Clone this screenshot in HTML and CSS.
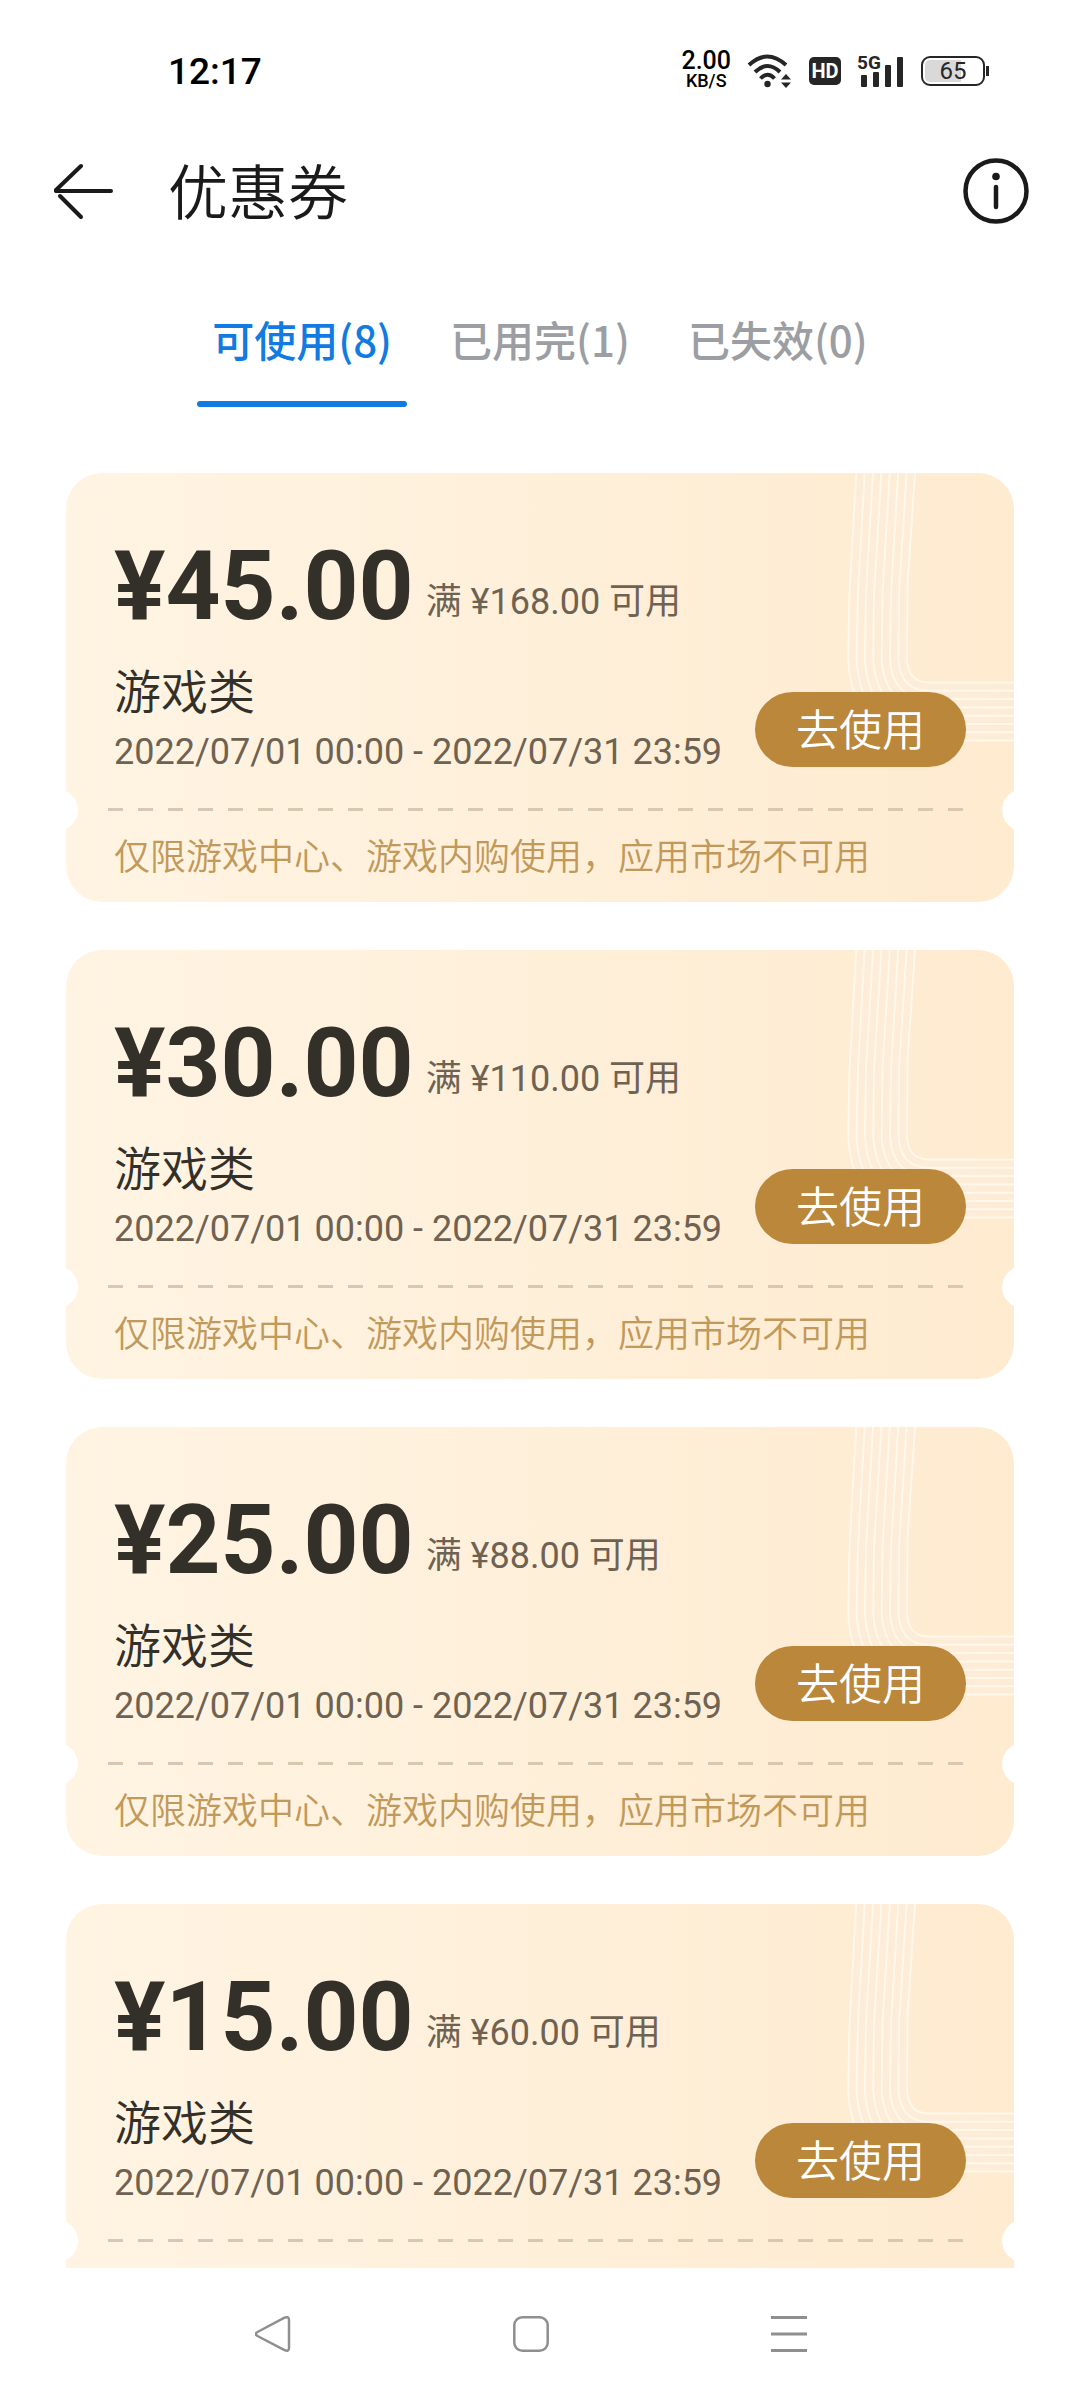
FILE: index.html
```
<!DOCTYPE html>
<html lang="zh-CN">
<head>
    <meta charset="UTF-8">
    <meta name="viewport" content="width=device-width, initial-scale=1.0">
    <title>优惠券</title>
    <link rel="stylesheet" href="styles.css">
</head>
<body>
    <!-- Shared line pattern for the coupon corner -->
    <svg class="defs" aria-hidden="true">
        <symbol id="corner-lines" viewBox="0 0 170 272">
            <path class="band" d="M12 0 L4 186 Q4 268 84 268 H170 V210 H84 Q63 208 63 186 L71 0 Z"/>
            <g class="lines">
                <path d="M71 0 L63.5 110 L63 186 Q64 209 84 209.500 H170"/>
                <path d="M62.600 0 L55 120 L54.500 186 Q56 217 84 217.800 H170"/>
                <path d="M54.200 0 L47 120 L46 186 Q48 225 84 226.100 H170"/>
                <path d="M45.800 0 L38.500 120 L37.700 186 Q40 233 84 234.400 H170"/>
                <path d="M37.400 0 L30 120 L29.300 186 Q32 241 84 242.700 H170"/>
                <path d="M29 0 L22 120 L21 186 Q24 249 84 251 H170"/>
                <path d="M20.600 0 L14 120 L12.600 186 Q16 257 84 259.300 H170"/>
                <path d="M12.200 0 L5.500 120 L4.200 186 Q8 266 84 267.600 H170"/>
            </g>
        </symbol>
    </svg>

    <div class="status-bar">
        <span class="clock">12:17</span>
        <div class="status-icons">
            <div class="net-speed"><span class="speed">2.00</span><span class="unit">KB/S</span></div>
            <svg class="wifi" viewBox="0 0 46 34" width="46" height="34">
                <g fill="none" stroke="#262626" stroke-width="4">
                    <path d="M2 11 Q20 -6 39 11"/>
                    <path d="M8 18 Q20.500 6 33 18"/>
                    <path d="M13.500 24.500 Q20.500 17 27.500 24.500"/>
                </g>
                <circle cx="20.500" cy="30" r="3.200" fill="#262626"/>
                <path d="M39 20 L44 25.500 H34 Z M34 28.500 H44 L39 34 Z" fill="#262626"/>
            </svg>
            <span class="hd">HD</span>
            <div class="signal">
                <span class="signal-label">5G</span>
                <svg viewBox="0 0 48 32" width="48" height="32">
                    <g fill="#262626">
                        <rect x="4" y="20" width="6" height="12" rx="1"/>
                        <rect x="16" y="17" width="6" height="15" rx="1"/>
                        <rect x="28" y="10" width="6" height="22" rx="1"/>
                        <rect x="40" y="2" width="6" height="30" rx="1"/>
                    </g>
                </svg>
            </div>
            <div class="battery"><span>65</span></div>
        </div>
    </div>

    <header class="page-header">
        <button class="icon-button" aria-label="返回">
            <svg viewBox="0 0 60 60" width="60" height="60" fill="none" stroke="#1a1a1a" stroke-width="4" stroke-linecap="round">
                <path d="M27 5 L2 29 Q1 30 3 30 H57"/>
                <path d="M6 35 L27 56"/>
            </svg>
        </button>
        <h1>优惠券</h1>
        <button class="icon-button" aria-label="说明">
            <svg viewBox="0 0 66 66" width="66" height="66">
                <circle cx="33" cy="33" r="30.500" fill="none" stroke="#1a1a1a" stroke-width="4.500"/>
                <circle cx="33" cy="18.500" r="3.800" fill="#1a1a1a"/>
                <path d="M33 29 V49" stroke="#1a1a1a" stroke-width="4.500" stroke-linecap="round"/>
            </svg>
        </button>
    </header>

    <nav class="tabs">
        <button class="tab active">可使用(8)</button>
        <button class="tab">已用完(1)</button>
        <button class="tab">已失效(0)</button>
    </nav>

    <main class="coupon-list">
        <article class="coupon">
            <svg class="corner"><use href="#corner-lines"/></svg>
            <div class="price">
                <strong>¥45.00</strong>
                <span>满 ¥168.00 可用</span>
            </div>
            <div class="detail">
                <div class="info">
                    <h2>游戏类</h2>
                    <p>2022/07/01 00:00 - 2022/07/31 23:59</p>
                </div>
                <button class="use-button">去使用</button>
            </div>
            <div class="divider"></div>
            <p class="note">仅限游戏中心、游戏内购使用，应用市场不可用</p>
        </article>

        <article class="coupon">
            <svg class="corner"><use href="#corner-lines"/></svg>
            <div class="price">
                <strong>¥30.00</strong>
                <span>满 ¥110.00 可用</span>
            </div>
            <div class="detail">
                <div class="info">
                    <h2>游戏类</h2>
                    <p>2022/07/01 00:00 - 2022/07/31 23:59</p>
                </div>
                <button class="use-button">去使用</button>
            </div>
            <div class="divider"></div>
            <p class="note">仅限游戏中心、游戏内购使用，应用市场不可用</p>
        </article>

        <article class="coupon">
            <svg class="corner"><use href="#corner-lines"/></svg>
            <div class="price">
                <strong>¥25.00</strong>
                <span>满 ¥88.00 可用</span>
            </div>
            <div class="detail">
                <div class="info">
                    <h2>游戏类</h2>
                    <p>2022/07/01 00:00 - 2022/07/31 23:59</p>
                </div>
                <button class="use-button">去使用</button>
            </div>
            <div class="divider"></div>
            <p class="note">仅限游戏中心、游戏内购使用，应用市场不可用</p>
        </article>

        <article class="coupon">
            <svg class="corner"><use href="#corner-lines"/></svg>
            <div class="price">
                <strong>¥15.00</strong>
                <span>满 ¥60.00 可用</span>
            </div>
            <div class="detail">
                <div class="info">
                    <h2>游戏类</h2>
                    <p>2022/07/01 00:00 - 2022/07/31 23:59</p>
                </div>
                <button class="use-button">去使用</button>
            </div>
            <div class="divider"></div>
        </article>
    </main>

    <footer class="system-nav">
        <button class="icon-button" aria-label="后退">
            <svg viewBox="0 0 36 36" width="36" height="36" fill="none" stroke="#8f8f8f" stroke-width="2.500">
                <path d="M2.500 16 L29.500 1.700 Q34 0 34 4 V32 Q34 36 29.500 34 L2.500 20 Q-1 18 2.500 16 Z"/>
            </svg>
        </button>
        <button class="icon-button" aria-label="主页">
            <svg viewBox="0 0 36 36" width="36" height="36" fill="none" stroke="#8f8f8f" stroke-width="2.500">
                <rect x="1.300" y="1.300" width="33.400" height="33.400" rx="8"/>
            </svg>
        </button>
        <button class="icon-button" aria-label="最近任务">
            <svg viewBox="0 0 36 36" width="36" height="36" stroke="#8f8f8f" stroke-width="3">
                <path d="M0 1.500 H36 M0 18 H36 M0 34.500 H36"/>
            </svg>
        </button>
    </footer>
</body>
</html>
```

FILE: styles.css
```
* {
    box-sizing: border-box;
}

body {
    font-family: Roboto, "Noto Sans CJK SC", sans-serif;
    margin: 0;
    height: 100vh;
    display: flex;
    flex-direction: column;
    overflow: hidden;
    background-color: #fff;
    color: #1a1a1a;
}

h1, h2, p {
    margin: 0;
    font-weight: normal;
}

button {
    font-family: inherit;
    border: none;
    padding: 0;
    background: none;
    cursor: pointer;
}

svg {
    display: block;
}

.defs {
    position: absolute;
    width: 0;
    height: 0;
}

.band {
    fill: rgba(250, 236, 220, 0.6);
}

.lines path {
    fill: none;
    stroke: #fff8ea;
    stroke-width: 2;
}

/* Status bar */
.status-bar {
    display: flex;
    flex-shrink: 0;
    align-items: center;
    justify-content: space-between;
    height: 142px;
    padding: 0 95px 0 168px;
    color: #000;
}

.clock {
    font-size: 37px;
    font-weight: 500;
}

.status-icons {
    display: flex;
    align-items: center;
    gap: 16px;
}

.net-speed {
    display: flex;
    flex-direction: column;
    align-items: center;
    font-weight: 500;
}

.speed {
    font-size: 25px;
    line-height: 20px;
}

.unit {
    font-size: 18px;
    line-height: 20px;
}

.hd {
    width: 32px;
    border-radius: 5px;
    background-color: #262626;
    color: #fff;
    font-size: 20px;
    font-weight: bold;
    line-height: 28px;
    text-align: center;
}

.signal {
    position: relative;
}

.signal-label {
    position: absolute;
    top: 0;
    left: 0;
    color: #262626;
    font-size: 19px;
    font-weight: bold;
    line-height: 16px;
}

.battery {
    position: relative;
    width: 64px;
    height: 30px;
    padding: 2px;
    border: 2px solid #262626;
    border-radius: 9px;
    color: #262626;
    font-size: 24px;
    line-height: 22px;
    text-align: center;
    background: linear-gradient(to right, #d9d9d9 65%, #fff 65%) content-box;
}

.battery::after {
    content: "";
    position: absolute;
    top: 8px;
    right: -6px;
    width: 3px;
    height: 10px;
    background-color: #262626;
}

/* Page header */
.page-header {
    display: flex;
    flex-shrink: 0;
    align-items: center;
    height: 98px;
    padding: 0 51px 0 54px;
}

.page-header h1 {
    flex: 1;
    padding: 8px 0 0 54px;
    font-size: 60px;
    font-weight: 350;
    line-height: 80px;
}

/* Tabs */
.tabs {
    display: flex;
    flex-shrink: 0;
    justify-content: center;
    gap: 28px;
    padding-top: 30px;
    font-family: "Noto Sans CJK SC", sans-serif;
}

.tab {
    position: relative;
    padding: 42px 15px 41px;
    color: #9b9ea2;
    font-size: 42px;
    font-weight: 500;
    line-height: 54px;
}

.tab.active {
    color: #117be2;
}

.tab.active::after {
    content: "";
    position: absolute;
    left: 0;
    right: 0;
    bottom: 0;
    height: 6px;
    border-radius: 3px;
    background-color: #117be2;
}

/* Coupons */
.coupon-list {
    flex: 1;
    min-height: 0;
    overflow: hidden;
    padding: 66px 66px 0;
}

.coupon {
    position: relative;
    margin-bottom: 48px;
    padding: 65px 48px 20px;
    border-radius: 36px;
    background: linear-gradient(to right, #fff4e3, #feebd0);
    overflow: hidden;
}

.coupon:last-child {
    padding-bottom: 92px;
}

/* Ticket notches */
.coupon::before,
.coupon::after {
    content: "";
    position: absolute;
    top: 316px;
    width: 42px;
    height: 42px;
    border-radius: 50%;
    background-color: #fff;
}

.coupon::before {
    left: -30px;
}

.coupon::after {
    right: -30px;
}

.corner {
    position: absolute;
    top: 0;
    right: 0;
    width: 170px;
    height: 272px;
}

.price {
    display: flex;
    align-items: flex-end;
    gap: 12px;
    height: 96px;
}

.price strong {
    color: #33302a;
    font-size: 96px;
    line-height: 96px;
}

.price span {
    padding-bottom: 8px;
    color: #6e6253;
    font-size: 36px;
    line-height: 48px;
}

.detail {
    display: flex;
    align-items: flex-end;
    justify-content: space-between;
    padding: 29px 0 32px;
}

.info h2 {
    color: #33302a;
    font-size: 47px;
    font-weight: 350;
    line-height: 60px;
}

.info p {
    margin-top: 5px;
    color: #6e6253;
    font-size: 36px;
    line-height: 48px;
    white-space: nowrap;
}

.use-button {
    position: relative;
    height: 75px;
    margin-bottom: 9px;
    padding: 0 41px 6px;
    border-radius: 38px;
    background-color: rgba(185, 131, 53, 0.97);
    color: #fff;
    font-size: 43px;
    font-weight: 350;
}

.divider {
    height: 3px;
    margin: 0 0 23px -6px;
    background: repeating-linear-gradient(to right, #d8c8b1 0 15px, transparent 15px 30px);
}

.note {
    color: #c1995a;
    font-size: 36px;
    font-weight: 350;
    line-height: 48px;
}

/* System navigation */
.system-nav {
    display: flex;
    flex-shrink: 0;
    align-items: center;
    justify-content: space-between;
    height: 132px;
    padding: 0 273px 0 255px;
}
```
